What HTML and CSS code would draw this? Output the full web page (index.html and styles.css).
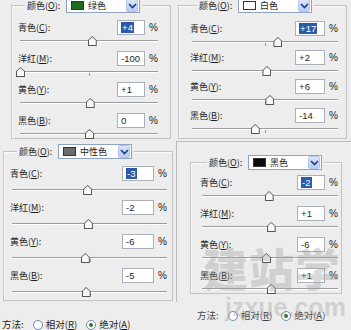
FILE: index.html
```html
<!DOCTYPE html>
<html lang="zh-CN">
<head>
<meta charset="utf-8">
<link rel="stylesheet" href="styles.css">
</head>
<body>
<div class="canvas">
  <div class="edge edge-v"></div>
  <div class="edge edge-h"></div>

  <!-- top left : green -->
  <div class="win tl">
    <div class="legend"><span class="lbl">颜色(<u>O</u>):</span><span class="dd"><i class="sw green"></i><span class="ddt">绿色</span><b class="arr"><svg width="9" height="6" viewBox="0 0 9 6"><path d="M1 1 L4.5 4.5 L8 1" fill="none" stroke="#1d3a8a" stroke-width="1.6"/></svg></b></span></div>
    <div class="row"><span class="lbl">青色(<u>C</u>):</span><span class="inp"><em class="sel">+4</em></span><span class="pct">%</span></div>
    <div class="sl"><i class="trk"></i><i class="tick"></i><i class="th" style="left:52%"></i></div>
    <div class="row"><span class="lbl">洋红(<u>M</u>):</span><span class="inp">-100</span><span class="pct">%</span></div>
    <div class="sl"><i class="trk"></i><i class="tick"></i><i class="th" style="left:0%"></i></div>
    <div class="row"><span class="lbl">黄色(<u>Y</u>):</span><span class="inp">+1</span><span class="pct">%</span></div>
    <div class="sl"><i class="trk"></i><i class="tick"></i><i class="th" style="left:50.5%"></i></div>
    <div class="row"><span class="lbl">黑色(<u>B</u>):</span><span class="inp">0</span><span class="pct">%</span></div>
    <div class="sl"><i class="trk"></i><i class="tick"></i><i class="th" style="left:50%"></i></div>
  </div>

  <!-- top right : white -->
  <div class="win tr">
    <div class="legend"><span class="lbl">颜色(<u>O</u>):</span><span class="dd"><i class="sw white"></i><span class="ddt">白色</span><b class="arr"><svg width="9" height="6" viewBox="0 0 9 6"><path d="M1 1 L4.5 4.5 L8 1" fill="none" stroke="#1d3a8a" stroke-width="1.6"/></svg></b></span></div>
    <div class="row"><span class="lbl">青色(<u>C</u>):</span><span class="inp"><em class="sel">+17</em></span><span class="pct">%</span></div>
    <div class="sl"><i class="trk"></i><i class="tick"></i><i class="th" style="left:58.5%"></i></div>
    <div class="row"><span class="lbl">洋红(<u>M</u>):</span><span class="inp">+2</span><span class="pct">%</span></div>
    <div class="sl"><i class="trk"></i><i class="tick"></i><i class="th" style="left:51%"></i></div>
    <div class="row"><span class="lbl">黄色(<u>Y</u>):</span><span class="inp">+6</span><span class="pct">%</span></div>
    <div class="sl"><i class="trk"></i><i class="tick"></i><i class="th" style="left:53%"></i></div>
    <div class="row"><span class="lbl">黑色(<u>B</u>):</span><span class="inp">-14</span><span class="pct">%</span></div>
    <div class="sl"><i class="trk"></i><i class="tick"></i><i class="th" style="left:43%"></i></div>
  </div>

  <!-- bottom left : neutral -->
  <div class="win bl">
    <div class="legend"><span class="lbl">颜色(<u>O</u>):</span><span class="dd"><i class="sw gray"></i><span class="ddt">中性色</span><b class="arr"><svg width="9" height="6" viewBox="0 0 9 6"><path d="M1 1 L4.5 4.5 L8 1" fill="none" stroke="#1d3a8a" stroke-width="1.6"/></svg></b></span></div>
    <div class="row"><span class="lbl">青色(<u>C</u>):</span><span class="inp"><em class="sel">-3</em></span><span class="pct">%</span></div>
    <div class="sl"><i class="trk"></i><i class="tick"></i><i class="th" style="left:48.5%"></i></div>
    <div class="row"><span class="lbl">洋红(<u>M</u>):</span><span class="inp">-2</span><span class="pct">%</span></div>
    <div class="sl"><i class="trk"></i><i class="tick"></i><i class="th" style="left:49%"></i></div>
    <div class="row"><span class="lbl">黄色(<u>Y</u>):</span><span class="inp">-6</span><span class="pct">%</span></div>
    <div class="sl"><i class="trk"></i><i class="tick"></i><i class="th" style="left:47%"></i></div>
    <div class="row"><span class="lbl">黑色(<u>B</u>):</span><span class="inp">-5</span><span class="pct">%</span></div>
    <div class="sl"><i class="trk"></i><i class="tick"></i><i class="th" style="left:47.5%"></i></div>
  </div>

  <!-- bottom right : black -->
  <div class="win br">
    <div class="legend"><span class="lbl">颜色(<u>O</u>):</span><span class="dd"><i class="sw black"></i><span class="ddt">黑色</span><b class="arr"><svg width="9" height="6" viewBox="0 0 9 6"><path d="M1 1 L4.5 4.5 L8 1" fill="none" stroke="#1d3a8a" stroke-width="1.6"/></svg></b></span></div>
    <div class="row"><span class="lbl">青色(<u>C</u>):</span><span class="inp"><em class="sel">-2</em></span><span class="pct">%</span></div>
    <div class="sl"><i class="trk"></i><i class="tick"></i><i class="th" style="left:49%"></i></div>
    <div class="row"><span class="lbl">洋红(<u>M</u>):</span><span class="inp">+1</span><span class="pct">%</span></div>
    <div class="sl"><i class="trk"></i><i class="tick"></i><i class="th" style="left:50.5%"></i></div>
    <div class="row"><span class="lbl">黄色(<u>Y</u>):</span><span class="inp">-6</span><span class="pct">%</span></div>
    <div class="sl"><i class="trk"></i><i class="tick"></i><i class="th" style="left:47%"></i></div>
    <div class="row"><span class="lbl">黑色(<u>B</u>):</span><span class="inp">+1</span><span class="pct">%</span></div>
    <div class="sl"><i class="trk"></i><i class="tick"></i><i class="th" style="left:50.5%"></i></div>
  </div>

  <div class="method m-left"><span>方法:</span><span class="radio"></span><span>相对(<u>R</u>)</span><span class="radio on"></span><span>绝对(<u>A</u>)</span></div>
  <div class="method m-right"><span>方法:</span><span class="radio"></span><span>相对(<u>R</u>)</span><span class="radio on"></span><span>绝对(<u>A</u>)</span></div>

  <div class="wm"><span class="wm-cn">建站学</span><span class="wm-en">jzxue.com</span></div>
</div>
</body>
</html>
```

FILE: styles.css
```css
* { box-sizing: border-box; }
html, body { margin: 0; padding: 0; }
body {
  width: 351px;
  height: 330px;
  overflow: hidden;
  background: #ededed;
  font-family: "Noto Sans CJK SC", "Liberation Sans", sans-serif;
  font-size: 9px;
  color: #1e1e1e;
}
.canvas { position: relative; width: 351px; height: 330px; }

.edge { position: absolute; background: #bdbdbd; }
.edge-v { left: 176px; top: 142px; width: 1px; height: 160px; }
.edge-h { left: 176px; top: 141px; width: 175px; height: 1px; }

/* fieldset-like panels placed on the composite canvas */
.win {
  position: absolute;
  border: 1px solid #c3c3c3;
  box-shadow: inset 1px 1px 0 #fafafa;
  display: flex;
  flex-direction: column;
}
.tl { left: 11px; top: 5px; width: 160px; height: 134px; padding: 14px 12px 0 6px; --sh: 16px; --tt: 5px; --iw: 28px; --lg: 13px; }
.tr { left: 178px; top: 5px; width: 169px; height: 134px; padding: 15px 8px 0 11px; --sh: 14px; --tt: 5px; --iw: 30px; --lg: 18px; }
.bl { left: 3px; top: 151px; width: 170px; height: 150px; padding: 14px 5px 0 6px; --sh: 19px; --tt: 8px; --iw: 32px; --lg: 13px; }
.br { left: 190px; top: 162px; width: 152px; height: 132px; padding: 12px 3px 0 9px; --sh: 16px; --tt: 5px; --iw: 28px; --lg: 16px; }

.legend {
  position: absolute;
  top: -8px;
  left: var(--lg);
  height: 15px;
  display: flex;
  align-items: center;
  background: #ededed;
  padding: 0 2px;
}
.legend .lbl { width: 36px; }
.dd {
  margin-left: 3px;
  width: 74px;
  height: 15px;
  background: #fff;
  border: 1px solid #8fa3bd;
  display: flex;
  align-items: center;
  padding-left: 4px;
}
.sw { width: 13px; height: 9px; border: 1px solid #333; display: block; }
.sw.green { background: #1d6b1d; }
.sw.white { background: #fff; }
.sw.gray { background: #6b6b6b; }
.sw.black { background: #0c0c0c; }
.ddt { margin-left: 4px; flex: 1; }
.arr {
  width: 12px;
  height: 13px;
  margin-right: 1px;
  background: linear-gradient(#dbe5fb, #b8cbf3);
  border: 1px solid #b4c6ee;
  border-radius: 2px;
  display: flex;
  align-items: center;
  justify-content: center;
}
.arr svg { display: block; }

.row {
  height: 15px;
  display: flex;
  align-items: center;
  flex: none;
}
.row .lbl { flex: 1; }
.inp {
  width: var(--iw);
  height: 15px;
  background: #fff;
  border: 1px solid #a9b0b8;
  padding-left: 3px;
  display: flex;
  align-items: center;
  font-family: "Liberation Sans", sans-serif;
  font-size: 9.5px;
}
.sel { font-style: normal; background: #2c5aa8; color: #fff; padding: 0 1px; line-height: 11px; }
.pct { margin-left: 4px; font-family: "Liberation Sans", sans-serif; font-size: 10px; }

.sl {
  position: relative;
  height: var(--sh);
  margin-left: 2px;
  flex: none;
}
.trk {
  position: absolute;
  left: 0; right: 0;
  top: var(--tt);
  height: 2px;
  border-top: 1px solid #9c9c9c;
  border-bottom: 1px solid #fff;
}
.tick {
  position: absolute;
  left: 50%;
  top: calc(var(--tt) + 2px);
  width: 1px;
  height: 3px;
  background: #9c9c9c;
}
.th {
  position: absolute;
  top: calc(var(--tt) - 4px);
  width: 9px;
  height: 10px;
  margin-left: -4px;
  background: #555;
  clip-path: polygon(50% 0, 100% 42%, 100% 100%, 0 100%, 0 42%);
}
.th::after {
  content: "";
  position: absolute;
  left: 1px; top: 1px; right: 1px; bottom: 1px;
  background: #fbfbf6;
  clip-path: polygon(50% 0, 100% 42%, 100% 100%, 0 100%, 0 42%);
}

.method {
  position: absolute;
  display: flex;
  align-items: center;
  gap: 3px;
  height: 11px;
  line-height: 11px;
  font-size: 9.5px;
}
.m-left { left: 2px; top: 319px; }
.m-right { left: 197px; top: 310px; color: #444; }
.radio {
  width: 10px;
  height: 10px;
  border: 1px solid #6f8ab0;
  border-radius: 50%;
  background: #fff;
  margin-left: 6px;
  position: relative;
}
.radio.on::after {
  content: "";
  position: absolute;
  left: 2px; top: 2px;
  width: 4px; height: 4px;
  border-radius: 50%;
  background: #2d7a2d;
}

.wm {
  position: absolute;
  left: 203px;
  top: 238px;
  display: flex;
  flex-direction: column;
  color: rgba(160, 160, 160, 0.38);
  pointer-events: none;
}
.wm-cn { font-size: 45px; font-weight: 900; letter-spacing: 1px; line-height: 60px; }
.wm-en { font-family: "Liberation Sans", sans-serif; font-size: 25px; font-weight: bold; line-height: 24px; margin-left: 22px; margin-top: -3px; }
```
